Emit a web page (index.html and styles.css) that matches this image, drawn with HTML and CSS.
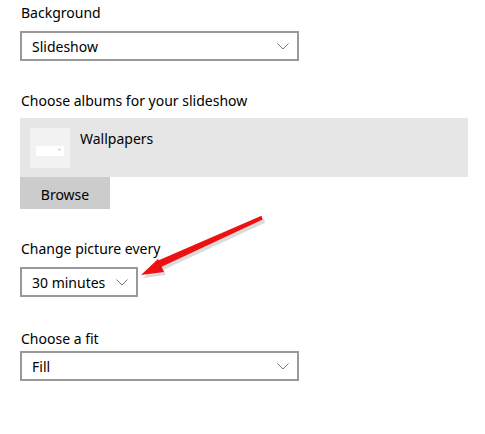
FILE: index.html
```html
<!DOCTYPE html>
<html lang="en">
<head>
  <meta charset="UTF-8">
  <meta name="viewport" content="width=device-width, initial-scale=1.0">
  <title>Background settings</title>
  <link rel="stylesheet" href="styles.css">
</head>
<body>
  <main class="settings">
    <section class="group">
      <p class="label">Background</p>
      <div class="dropdown wide">
        <span>Slideshow</span>
        <svg class="chevron" width="12" height="7" viewBox="0 0 12 7"><polyline points="0.5,0.5 6,6 11.5,0.5"/></svg>
      </div>
    </section>

    <section class="group">
      <p class="label albums-label">Choose albums for your slideshow</p>
      <div class="album">
        <div class="thumb">
          <div class="thumb-img"><span class="dot"></span></div>
        </div>
        <span class="album-name">Wallpapers</span>
      </div>
      <button class="browse">Browse</button>
    </section>

    <section class="group interval">
      <p class="label">Change picture every</p>
      <div class="dropdown narrow">
        <span>30 minutes</span>
        <svg class="chevron" width="12" height="7" viewBox="0 0 12 7"><polyline points="0.5,0.5 6,6 11.5,0.5"/></svg>
      </div>
    </section>

    <section class="group">
      <p class="label fit-label">Choose a fit</p>
      <div class="dropdown wide">
        <span>Fill</span>
        <svg class="chevron" width="12" height="7" viewBox="0 0 12 7"><polyline points="0.5,0.5 6,6 11.5,0.5"/></svg>
      </div>
    </section>
  </main>

  <!-- annotation arrow drawn over the page -->
  <svg class="arrow" width="485" height="434" viewBox="0 0 485 434">
    <g fill="#b0b0b0" opacity="0.45" transform="translate(2,3)">
      <polygon points="262,216 263,219.8 160,267.5 157,261.5"/>
      <polygon points="141,275 158,259 164,272"/>
    </g>
    <polygon fill="#ee1111" points="261.5,215.8 262.7,219.5 160,267.5 157,261"/>
    <polygon fill="#ee1111" points="141,275 158,259 164,272"/>
  </svg>
</body>
</html>
```

FILE: styles.css
```css
body {
  font-family: 'Noto Sans', sans-serif;
  font-size: 14px;
  margin: 0;
  padding: 0;
  background: #fff;
  color: #000;
}
.settings {
  padding: 1px 20px 0 20px;
}
.group {
  margin-bottom: 28px;
}
.interval {
  margin-bottom: 30px;
}
.label {
  margin: 0 0 8px 1px;
  padding-top: 2px;
  line-height: 20px;
}
.albums-label {
  margin-bottom: 7px;
}
.fit-label {
  margin-bottom: 2px;
}
.dropdown {
  box-sizing: border-box;
  height: 30px;
  border: 2px solid #999;
  display: flex;
  align-items: center;
  justify-content: space-between;
  padding: 0 8px 0 10px;
}
.wide {
  width: 279px;
}
.narrow {
  width: 118px;
}
.chevron polyline {
  fill: none;
  stroke: #777;
  stroke-width: 1;
}
.album {
  width: 448px;
  height: 59px;
  background: #e6e6e6;
  display: flex;
  align-items: flex-start;
  padding: 10px;
  box-sizing: border-box;
  gap: 10px;
}
.thumb {
  width: 40px;
  height: 40px;
  background: #f2f2f2;
  display: flex;
  align-items: center;
  justify-content: center;
  flex-shrink: 0;
}
.thumb-img {
  position: relative;
  width: 28px;
  height: 10px;
  margin-top: 5px;
  background: #fff;
}
.dot {
  position: absolute;
  right: 3px;
  top: 2px;
  width: 3px;
  height: 3px;
  border-radius: 50%;
  background: #e0e0e0;
}
.album-name {
  line-height: 20px;
  padding-top: 1px;
}
.browse {
  display: block;
  width: 90px;
  height: 32px;
  border: none;
  background: #ccc;
  font-family: inherit;
  font-size: 14px;
  color: #000;
  padding: 2px 0 0 0;
}
.arrow {
  position: absolute;
  left: 0;
  top: 0;
  pointer-events: none;
}
```
